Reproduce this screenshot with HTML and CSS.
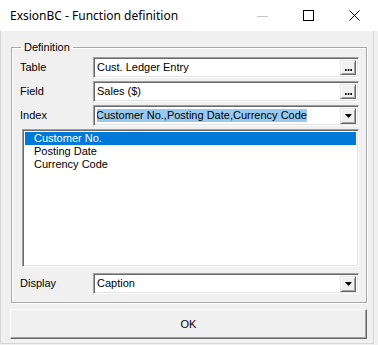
FILE: index.html
```html
<!DOCTYPE html>
<html>
<head>
    <meta charset="UTF-8">
    <title>ExsionBC - Function definition</title>
    <link rel="stylesheet" href="styles.css">
</head>
<body>
    <div class="window">
        <div class="titlebar">
            <div class="title">ExsionBC - Function definition</div>
            <div class="caption-btn">
                <svg width="12" height="12" viewBox="0 0 12 12"><line x1="0" y1="6.5" x2="11" y2="6.5" stroke="#c4c4c4" stroke-width="1"/></svg>
            </div>
            <div class="caption-btn">
                <svg width="12" height="12" viewBox="0 0 12 12"><rect x="0.5" y="0.5" width="10" height="10" fill="none" stroke="#000" stroke-width="1"/></svg>
            </div>
            <div class="caption-btn">
                <svg width="12" height="12" viewBox="0 0 12 12"><path d="M0.5 0.5 L10.5 10.5 M10.5 0.5 L0.5 10.5" stroke="#000" stroke-width="1"/></svg>
            </div>
        </div>

        <div class="client">
            <fieldset class="group">
                <legend>Definition</legend>

                <div class="row">
                    <label>Table</label>
                    <div class="edit">
                        <span class="value">Cust. Ledger Entry</span>
                        <button class="dots">
                            <svg width="7" height="2" viewBox="0 0 7 2"><rect x="0" y="0" width="1.6" height="2" fill="#000"/><rect x="2.7" y="0" width="1.6" height="2" fill="#000"/><rect x="5.4" y="0" width="1.6" height="2" fill="#000"/></svg>
                        </button>
                    </div>
                </div>

                <div class="row">
                    <label>Field</label>
                    <div class="edit">
                        <span class="value">Sales ($)</span>
                        <button class="dots">
                            <svg width="7" height="2" viewBox="0 0 7 2"><rect x="0" y="0" width="1.6" height="2" fill="#000"/><rect x="2.7" y="0" width="1.6" height="2" fill="#000"/><rect x="5.4" y="0" width="1.6" height="2" fill="#000"/></svg>
                        </button>
                    </div>
                </div>

                <div class="row">
                    <label>Index</label>
                    <div class="edit combo">
                        <span class="value"><span class="sel-text">Customer No.,Posting Date,Currency Code</span></span>
                        <button class="drop">
                            <svg width="7" height="4" viewBox="0 0 7 4"><path d="M0 0 H7 L3.5 4 Z" fill="#000"/></svg>
                        </button>
                    </div>
                </div>

                <div class="listbox">
                    <div class="item selected">Customer No.</div>
                    <div class="item">Posting Date</div>
                    <div class="item">Currency Code</div>
                </div>

                <div class="row row-display">
                    <label>Display</label>
                    <div class="edit combo">
                        <span class="value">Caption</span>
                        <button class="drop">
                            <svg width="7" height="4" viewBox="0 0 7 4"><path d="M0 0 H7 L3.5 4 Z" fill="#000"/></svg>
                        </button>
                    </div>
                </div>
            </fieldset>

            <button class="ok">OK</button>
        </div>
    </div>
</body>
</html>
```

FILE: styles.css
```css
* {
    box-sizing: border-box;
}

html, body {
    margin: 0;
    padding: 0;
    background: #f0f0f0;
    font-family: "Liberation Sans", Arial, sans-serif;
    font-size: 11px;
    color: #000;
}

.window {
    width: 378px;
    height: 345px;
}

/* title bar */
.titlebar {
    height: 31px;
    background: #fff;
    display: flex;
    align-items: center;
}

.title {
    flex: 1;
    padding-left: 10px;
    font-family: "Noto Sans", sans-serif;
    font-size: 12px;
    color: #000;
}

.caption-btn {
    width: 46px;
    height: 31px;
    display: flex;
    align-items: center;
    justify-content: center;
}

/* dialog body */
.client {
    width: 374px;
    height: 313px;
    border-left: 1px solid #d6d6d6;
    border-right: 1px solid #d6d6d6;
    border-bottom: 1px solid #d6d6d6;
    padding: 10px 6px 0 9px;
    display: flex;
    flex-direction: column;
}

.group {
    margin: 0 0 0 1px;
    padding: 3px 7px 8px 8px;
    border: 1px solid #a8a8a8;
    box-shadow: inset 1px 1px 0 #fff, 1px 1px 0 #fff;
    display: flex;
    flex-direction: column;
    gap: 3px;
}

.group legend {
    padding: 0 3px;
    margin-left: 1px;
    line-height: 13px;
}

.row {
    display: grid;
    grid-template-columns: 73px 1fr;
    align-items: center;
}

.row label {
    line-height: 13px;
}

.row-display {
    margin-top: 3px;
}

/* sunken edit field */
.edit {
    height: 21px;
    background: #fff;
    border: 1px solid;
    border-color: #a0a0a0 #fff #fff #a0a0a0;
    box-shadow: inset 1px 1px 0 #696969, inset -1px -1px 0 #e3e3e3;
    display: flex;
    align-items: center;
    padding: 1px 2px 1px 3px;
}

.edit .value {
    flex: 1;
    line-height: 13px;
    white-space: nowrap;
    overflow: hidden;
}

.sel-text {
    background: #99c9ef;
    padding: 1px 0;
    margin-left: -1px;
}

/* raised small buttons */
.dots,
.drop {
    width: 16px;
    height: 16px;
    padding: 0;
    margin: 0;
    background: #f0f0f0;
    border: 1px solid;
    border-color: #e3e3e3 #696969 #696969 #e3e3e3;
    box-shadow: inset 1px 1px 0 #fff, inset -1px -1px 0 #a0a0a0;
    display: flex;
    justify-content: center;
}

.dots {
    height: 15px;
    align-items: flex-end;
    padding-bottom: 3px;
}

.drop {
    align-items: center;
}

/* list */
.listbox {
    margin: 0 0 0 2px;
    height: 138px;
    background: #fff;
    border: 1px solid;
    border-color: #a0a0a0 #fff #fff #a0a0a0;
    box-shadow: inset 1px 1px 0 #696969, inset -1px -1px 0 #e3e3e3;
    padding: 2px 2px;
}

.item {
    line-height: 13px;
    padding-left: 9px;
}

.item.selected {
    background: #0078d7;
    color: #fff;
}

/* OK button */
.ok {
    margin: 6px 0 0 0;
    width: 357px;
    height: 30px;
    font-family: "Liberation Sans", Arial, sans-serif;
    font-size: 11px;
    color: #000;
    background: #f0f0f0;
    border: 1px solid;
    border-color: #fff #696969 #696969 #fff;
    box-shadow: inset -1px -1px 0 #a0a0a0;
    padding: 0;
}
```
